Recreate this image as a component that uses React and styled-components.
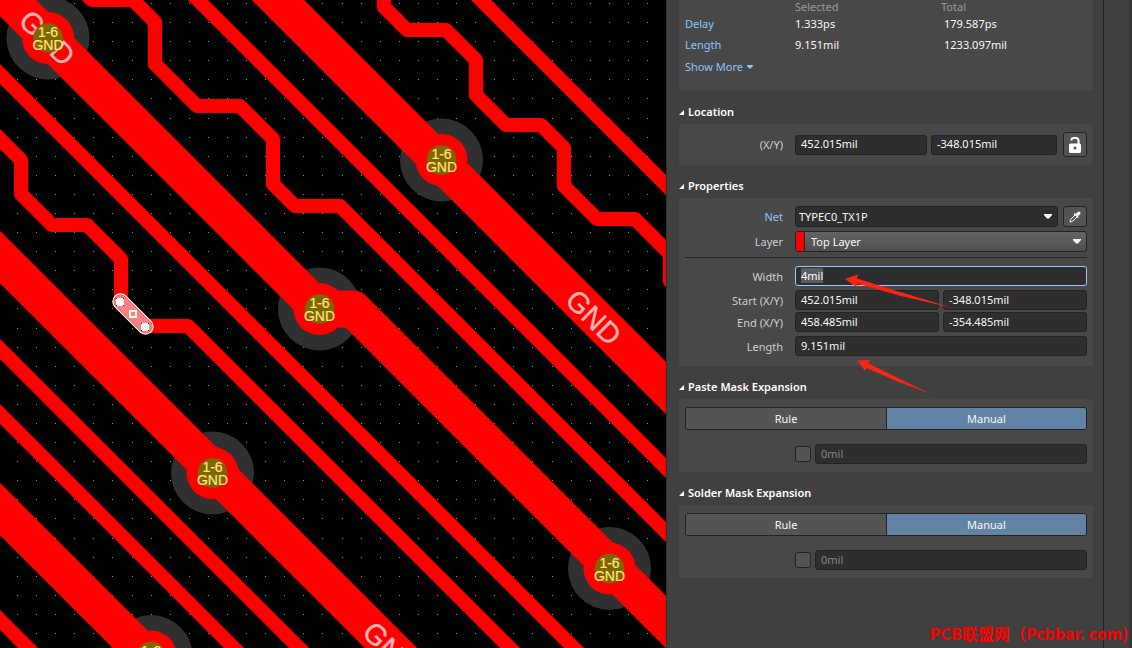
import React, { useEffect, useRef } from "react";
import styled, { createGlobalStyle } from "styled-components";

const GlobalStyle = createGlobalStyle`
  * { box-sizing: border-box; }
  html, body { margin: 0; background: #000; }
  body, input, select, button {
    font-family: "Noto Sans", "Open Sans", sans-serif;
    font-size: 11px;
    line-height: 16px;
  }
`;

const color = {
  panel: "#404040",
  card: "#484848",
  field: "#2e2e2e",
  edge: "#232323",
  button: "#545454",
  active: "#6283a3",
  link: "#8fc4f7",
  label: "#cfcfcf",
  text: "#f8f8f8",
  muted: "#989898",
  copper: "#ff0000",
};

/* ---------- page ---------- */

const Page = styled.div`
  display: flex;
  height: 100vh;
  overflow: hidden;
`;

const BoardPane = styled.main`
  flex: 1;
  min-width: 0;
  background: #000;
`;

const BoardSvg = styled.svg`
  display: block;
  width: 100%;
  height: 100%;
`;

const Panel = styled.aside`
  position: relative;
  flex: none;
  display: flex;
  width: 466px;
  background: ${color.panel};
  border-left: 1px solid #2f2f2f;
`;

const PanelBody = styled.div`
  flex: 1;
  padding: 0 10px 0 12px;
`;

const Gutter = styled.div`
  width: 29px;
  border-left: 1px solid #242424;
  border-right: 3px solid #393836;
`;

/* ---------- sections ---------- */

const Card = styled.div`
  padding: ${(p) => p.$pad || "8px 6px"};
  background: ${color.card};
  border-radius: ${(p) => (p.$cut ? "0 0 3px 3px" : "3px")};
`;

const SectionTitle = styled.h2`
  display: flex;
  align-items: center;
  gap: 4px;
  height: 33px;
  margin: 0;
  padding-top: 9px;
  color: #fff;
  font-size: 11px;
  font-weight: 600;
`;

const Fold = styled.svg`
  width: 5px;
  height: 5px;
  fill: #fff;
`;

const Stats = styled.table`
  width: 100%;
  table-layout: fixed;
  border-collapse: collapse;
  text-align: left;

  th, td { padding: 0; font-weight: 400; }
  thead th { height: 14px; line-height: 14px; color: ${color.muted}; }
  tbody tr { height: 21px; }
  tbody th, tbody td { padding-bottom: 2px; }
  tbody th { color: ${color.link}; }
  td { color: ${color.text}; }
  td:last-child { padding-left: 3px; }
`;

const StatsColumn = styled.col`
  width: ${(p) => p.$width};
`;

const MoreLink = styled.a`
  display: flex;
  align-items: center;
  gap: 4px;
  height: 23px;
  padding-bottom: 2px;
  color: ${color.link};
  text-decoration: none;
`;

const Row = styled.div`
  display: grid;
  grid-template-columns: 98px 1fr;
  column-gap: 12px;
  align-items: center;
  margin-top: ${(p) => p.$gap || "0"};
`;

const Label = styled.label`
  padding-top: ${(p) => (p.$level ? "0" : "2px")};
  color: ${(p) => (p.$link ? color.link : color.label)};
  text-align: right;
  white-space: nowrap;
`;

const Fields = styled.div`
  display: grid;
  grid-template-columns: ${(p) => p.$columns || "1fr"};
  align-items: center;
  gap: 4px;
`;

const Divider = styled.hr`
  height: 1px;
  margin: 5px 0 8px;
  border: 0;
  background: #2a2a2a;
`;

/* ---------- controls ---------- */

const TextField = styled.input`
  width: 100%;
  min-width: 0;
  height: 20px;
  padding: 0 5px 2px;
  border: 1px solid ${color.edge};
  border-radius: 3px;
  background: ${color.field};
  color: ${color.text};
  outline: none;

  &:focus { border-color: #9cc8fb; }
  &::selection { background: #5c5c5c; color: #fff; }
  &:disabled { color: #858585; }
`;

const Combo = styled.div`
  position: relative;
  display: flex;
  height: 21px;
  overflow: hidden;
  border: 1px solid ${color.edge};
  border-radius: 3px;
  background: ${(p) =>
    p.$raised ? "linear-gradient(#636363, #505050)" : color.field};
`;

const ComboSelect = styled.select`
  flex: 1;
  min-width: 0;
  padding: 0 20px 0 ${(p) => p.$indent};
  appearance: none;
  border: 0;
  background: transparent;
  color: ${color.text};
  outline: none;
`;

const ComboArrow = styled.svg`
  position: absolute;
  top: 7px;
  right: 5px;
  width: 8px;
  height: 5px;
  fill: #fff;
  pointer-events: none;
`;

const Swatch = styled.span`
  width: 9px;
  background: ${color.copper};
  border-right: 1px solid ${color.edge};
`;

const IconButton = styled.button`
  display: grid;
  place-items: center;
  justify-self: end;
  width: 24px;
  height: ${(p) => p.$height};
  padding: 0;
  border: 1px solid ${color.edge};
  border-radius: 3px;
  background: ${color.button};
`;

const Segments = styled.div`
  display: grid;
  grid-template-columns: 1fr 1fr;
  height: 23px;
  overflow: hidden;
  border: 1px solid ${color.edge};
  border-radius: 3px;
`;

const Segment = styled.button`
  padding: 0;
  border: 0;
  background: ${(p) => (p.$active ? color.active : color.button)};
  color: ${color.text};

  & + & { border-left: 1px solid ${color.edge}; }
`;

const Tick = styled.input`
  width: 16px;
  height: 16px;
  margin: 0;
  appearance: none;
  border: 1px solid ${color.edge};
  border-radius: 3px;
  background: ${color.button};
`;

/* ---------- overlays ---------- */

const Annotations = styled.svg`
  position: absolute;
  top: 0;
  left: 0;
  width: 100%;
  height: 100%;
  fill: #ff2314;
  pointer-events: none;
`;

const Watermark = styled.div`
  position: absolute;
  right: 4px;
  bottom: 3px;
  color: #ff0000;
  font-family: "Noto Sans CJK SC", sans-serif;
  font-size: 16px;
  font-weight: 700;
  line-height: 24px;
  white-space: nowrap;
`;

/* ---------- board drawing ---------- */

const NetName = styled.text`
  fill: #ffb3b3;
  stroke: #ffb3b3;
  stroke-width: 0.4px;
  font-family: "Liberation Sans", sans-serif;
  font-size: 29px;
  text-anchor: middle;
`;

const PadText = styled.text`
  fill: #ffe680;
  stroke: #ffe680;
  stroke-width: 0.2px;
  font-family: "Liberation Sans", sans-serif;
  font-size: 14px;
  text-anchor: middle;
`;

const steps = Array.from({ length: 60 }, (_, i) => i);
const gridX = steps.map((i) => Math.round(17 + i * 19.09));
const gridY = steps.map((i) => Math.round(3 + i * 19.09));
const gridPath = gridX
  .flatMap((x) => gridY.map((y) => `M${x} ${y}h1v1h-1z`))
  .join("");

/* 45 degree run through the whole board, given by its x at y = 0 */
const diagonal = (c) => `M${c - 60} -60L${c + 1300} 1300`;

const thinTracks = [
  diagonal(481),
  diagonal(198),
  diagonal(-74),
  diagonal(-349),
  diagonal(-414),
  diagonal(-620),
  "M72 -20L92 0H133L155 22V64L197 106H240L273 139V184L295 206H340L1100 966",
  "M384 -20V7L407 30H446L476 60V95L506 125H541L564 148V186L597 219H635L670 254V281L720 331",
  "M-20 119L21 160V194L52 225H87L121 259V301L146 326H188L700 838",
];

const wideTracks = [
  diagonal(278),
  diagonal(-257),
  diagonal(-509),
  "M-60 -70L319 309H353L1100 1056",
];

const vias = [
  [48, 38],
  [441.5, 160],
  [319.5, 309],
  [212.5, 473],
  [609.5, 568.5],
  [151, 656.5],
];

const netNames = [
  [47, 38],
  [593.5, 317.5],
  [390.5, 649.5],
];

function Handle({ x, y }) {
  return (
    <g transform={`translate(${x} ${y})`}>
      <path d="M0 0h8v8h-8z" fill="#fff" />
      <path d="M0 0h1v1h-1zM7 0h1v1h-1zM0 7h1v1h-1zM7 7h1v1h-1z" fill="#222" />
    </g>
  );
}

function Board() {
  return (
    <BoardSvg role="img" aria-label="Top layer routing">
      <defs>
        <pattern id="fine" width="3.818" height="3.818" patternUnits="userSpaceOnUse" x="17" y="3">
          <rect width="1" height="1" fill="#090909" />
        </pattern>
      </defs>
      <rect width="100%" height="100%" fill="url(#fine)" />
      <path d={gridPath} fill="#8c8c8c" shapeRendering="crispEdges" />
      {vias.map(([x, y]) => (
        <circle key={x} cx={x} cy={y} r="41.5" fill="#303030" />
      ))}
      <g fill="none" stroke={color.copper} strokeLinecap="round" strokeLinejoin="round">
        <g strokeWidth="14.2">
          {thinTracks.map((d) => (
            <path key={d} d={d} />
          ))}
        </g>
        <g strokeWidth="37">
          {wideTracks.map((d) => (
            <path key={d} d={d} />
          ))}
        </g>
      </g>
      {vias.map(([x, y]) => (
        <circle key={x} cx={x} cy={y} r="26" fill={color.copper} />
      ))}
      {netNames.map(([x, y]) => (
        <NetName key={x} transform={`translate(${x} ${y}) rotate(45)`} y="10">
          GND
        </NetName>
      ))}
      {vias.map(([x, y]) => (
        <g key={x} transform={`translate(${x} ${y})`}>
          <circle r="14.8" fill="#806600" />
          <PadText y="-1">1-6</PadText>
          <PadText y="12">GND</PadText>
        </g>
      ))}
      <g strokeLinecap="round">
        <path d="M120.5 301.5L145.5 326.5" stroke="#fff" strokeWidth="16.4" />
        <path d="M120.5 301.5L145.5 326.5" stroke="#d04040" strokeWidth="14" />
        <path d="M120.5 301.5L145.5 326.5" stroke="#ff8080" strokeWidth="13" />
      </g>
      <Handle x={116} y={298} />
      <Handle x={141} y={323} />
      <rect x="130" y="311" width="6" height="6" fill="#ff8080" stroke="#fff" strokeWidth="2" />
    </BoardSvg>
  );
}

/* ---------- panel parts ---------- */

function Title({ children }) {
  return (
    <SectionTitle>
      <Fold viewBox="0 0 5 5">
        <path d="M5 0V5H0z" />
      </Fold>
      {children}
    </SectionTitle>
  );
}

function DropDown({ id, value, indent, raised }) {
  return (
    <Combo $raised={raised}>
      {raised && <Swatch />}
      <ComboSelect id={id} $indent={indent} defaultValue={value}>
        <option>{value}</option>
      </ComboSelect>
      <ComboArrow viewBox="0 0 8 5">
        <path d="M0 0H8V1L5 4.500H3L0 1z" />
      </ComboArrow>
    </Combo>
  );
}

function LockIcon() {
  return (
    <svg width="14" height="18" viewBox="0 0 14 18">
      <path d="M3.500 4.500V4Q3.500 2 5.500 2H8Q10.500 2 10.500 4.500V8" fill="none" stroke="#fff" strokeWidth="2" />
      <path
        fillRule="evenodd"
        fill="#fff"
        d="M2.500 7.500H11.500Q13 7.500 13 9V15.500Q13 17 11.500 17H2.500Q1 17 1 15.500V9Q1 7.500 2.500 7.500zM7 10.600A1.500 1.500 0 1 0 7 13.600A1.500 1.500 0 1 0 7 10.600z"
      />
    </svg>
  );
}

function PipetteIcon() {
  return (
    <svg width="12" height="12" viewBox="0 0 12 12">
      <path d="M6.300 3.800L2 8.100Q1.300 9 1 11Q3 10.700 3.900 10L8.200 5.700" fill="none" stroke="#fff" strokeWidth="1" />
      <path d="M5.600 3L9 6.400" stroke="#fff" strokeWidth="1.300" strokeLinecap="round" />
      <path d="M6.800 3L8.700 1.100Q9.900 0 11.200 0.900Q12 2.200 11 3.300L9 5.200z" fill="#fff" />
    </svg>
  );
}

function Expansion({ title, id }) {
  return (
    <section>
      <Title>{title}</Title>
      <Card>
        <Segments role="group" aria-label={title}>
          <Segment type="button" aria-pressed="false">Rule</Segment>
          <Segment type="button" aria-pressed="true" $active>Manual</Segment>
        </Segments>
        <Row $gap="14px">
          <span />
          <Fields $columns="16px 1fr">
            <Tick type="checkbox" aria-label={`Enable ${title}`} />
            <TextField id={id} aria-label={title} defaultValue="0mil" disabled />
          </Fields>
        </Row>
      </Card>
    </section>
  );
}

export default function App() {
  const width = useRef(null);

  useEffect(() => {
    width.current.focus();
    width.current.select();
  }, []);

  return (
    <Page>
      <GlobalStyle />
      <BoardPane>
        <Board />
      </BoardPane>
      <Panel>
        <PanelBody>
          <Card $cut $pad="0 6px 12px">
            <Stats>
              <colgroup>
                <StatsColumn $width="110px" />
                <StatsColumn $width="146px" />
                <StatsColumn $width="auto" />
              </colgroup>
              <thead>
                <tr>
                  <th />
                  <th scope="col">Selected</th>
                  <th scope="col">Total</th>
                </tr>
              </thead>
              <tbody>
                <tr>
                  <th scope="row">Delay</th>
                  <td>1.333ps</td>
                  <td>179.587ps</td>
                </tr>
                <tr>
                  <th scope="row">Length</th>
                  <td>9.151mil</td>
                  <td>1233.097mil</td>
                </tr>
              </tbody>
            </Stats>
            <MoreLink href="#more">
              Show More
              <svg width="6" height="4" viewBox="0 0 6 4">
                <path d="M0 0H6V1L3 4L0 1z" fill={color.link} />
              </svg>
            </MoreLink>
          </Card>

          <section>
            <Title>Location</Title>
            <Card>
              <Row>
                <Label $level htmlFor="loc-x">(X/Y)</Label>
                <Fields $columns="132px 1fr 26px">
                  <TextField id="loc-x" defaultValue="452.015mil" />
                  <TextField aria-label="Location Y" defaultValue="-348.015mil" />
                  <IconButton $height="25px" type="button" aria-label="Lock">
                    <LockIcon />
                  </IconButton>
                </Fields>
              </Row>
            </Card>
          </section>

          <section>
            <Title>Properties</Title>
            <Card $pad="8px 6px 10px">
              <Row>
                <Label $level $link htmlFor="net">Net</Label>
                <Fields $columns="1fr 25px">
                  <DropDown id="net" value="TYPEC0_TX1P" indent="3px" />
                  <IconButton $height="21px" type="button" aria-label="Pick net">
                    <PipetteIcon />
                  </IconButton>
                </Fields>
              </Row>
              <Row $gap="4px">
                <Label $level htmlFor="layer">Layer</Label>
                <DropDown id="layer" value="Top Layer" indent="6px" raised />
              </Row>
              <Divider />
              <Row>
                <Label htmlFor="width">Width</Label>
                <TextField id="width" ref={width} defaultValue="4mil" />
              </Row>
              <Row $gap="4px">
                <Label htmlFor="start-x">Start (X/Y)</Label>
                <Fields $columns="1fr 1fr">
                  <TextField id="start-x" defaultValue="452.015mil" />
                  <TextField aria-label="Start Y" defaultValue="-348.015mil" />
                </Fields>
              </Row>
              <Row $gap="2px">
                <Label htmlFor="end-x">End (X/Y)</Label>
                <Fields $columns="1fr 1fr">
                  <TextField id="end-x" defaultValue="458.485mil" />
                  <TextField aria-label="End Y" defaultValue="-354.485mil" />
                </Fields>
              </Row>
              <Row $gap="4px">
                <Label htmlFor="length">Length</Label>
                <TextField id="length" defaultValue="9.151mil" />
              </Row>
            </Card>
          </section>

          <Expansion title="Paste Mask Expansion" id="paste" />
          <Expansion title="Solder Mask Expansion" id="solder" />
        </PanelBody>
        <Gutter />
        <Annotations aria-hidden="true">
          <path d="M178 279L191 274.500L190 278.500L233 292L286 308L232 295.500L190 283.500L189.500 287z" />
          <path d="M190.500 360.500L203 360L201.500 363.500L233 379L264 394L232 382L199.500 368L198 371z" />
        </Annotations>
        <Watermark>PCB联盟网（Pcbbar. com)</Watermark>
      </Panel>
    </Page>
  );
}
